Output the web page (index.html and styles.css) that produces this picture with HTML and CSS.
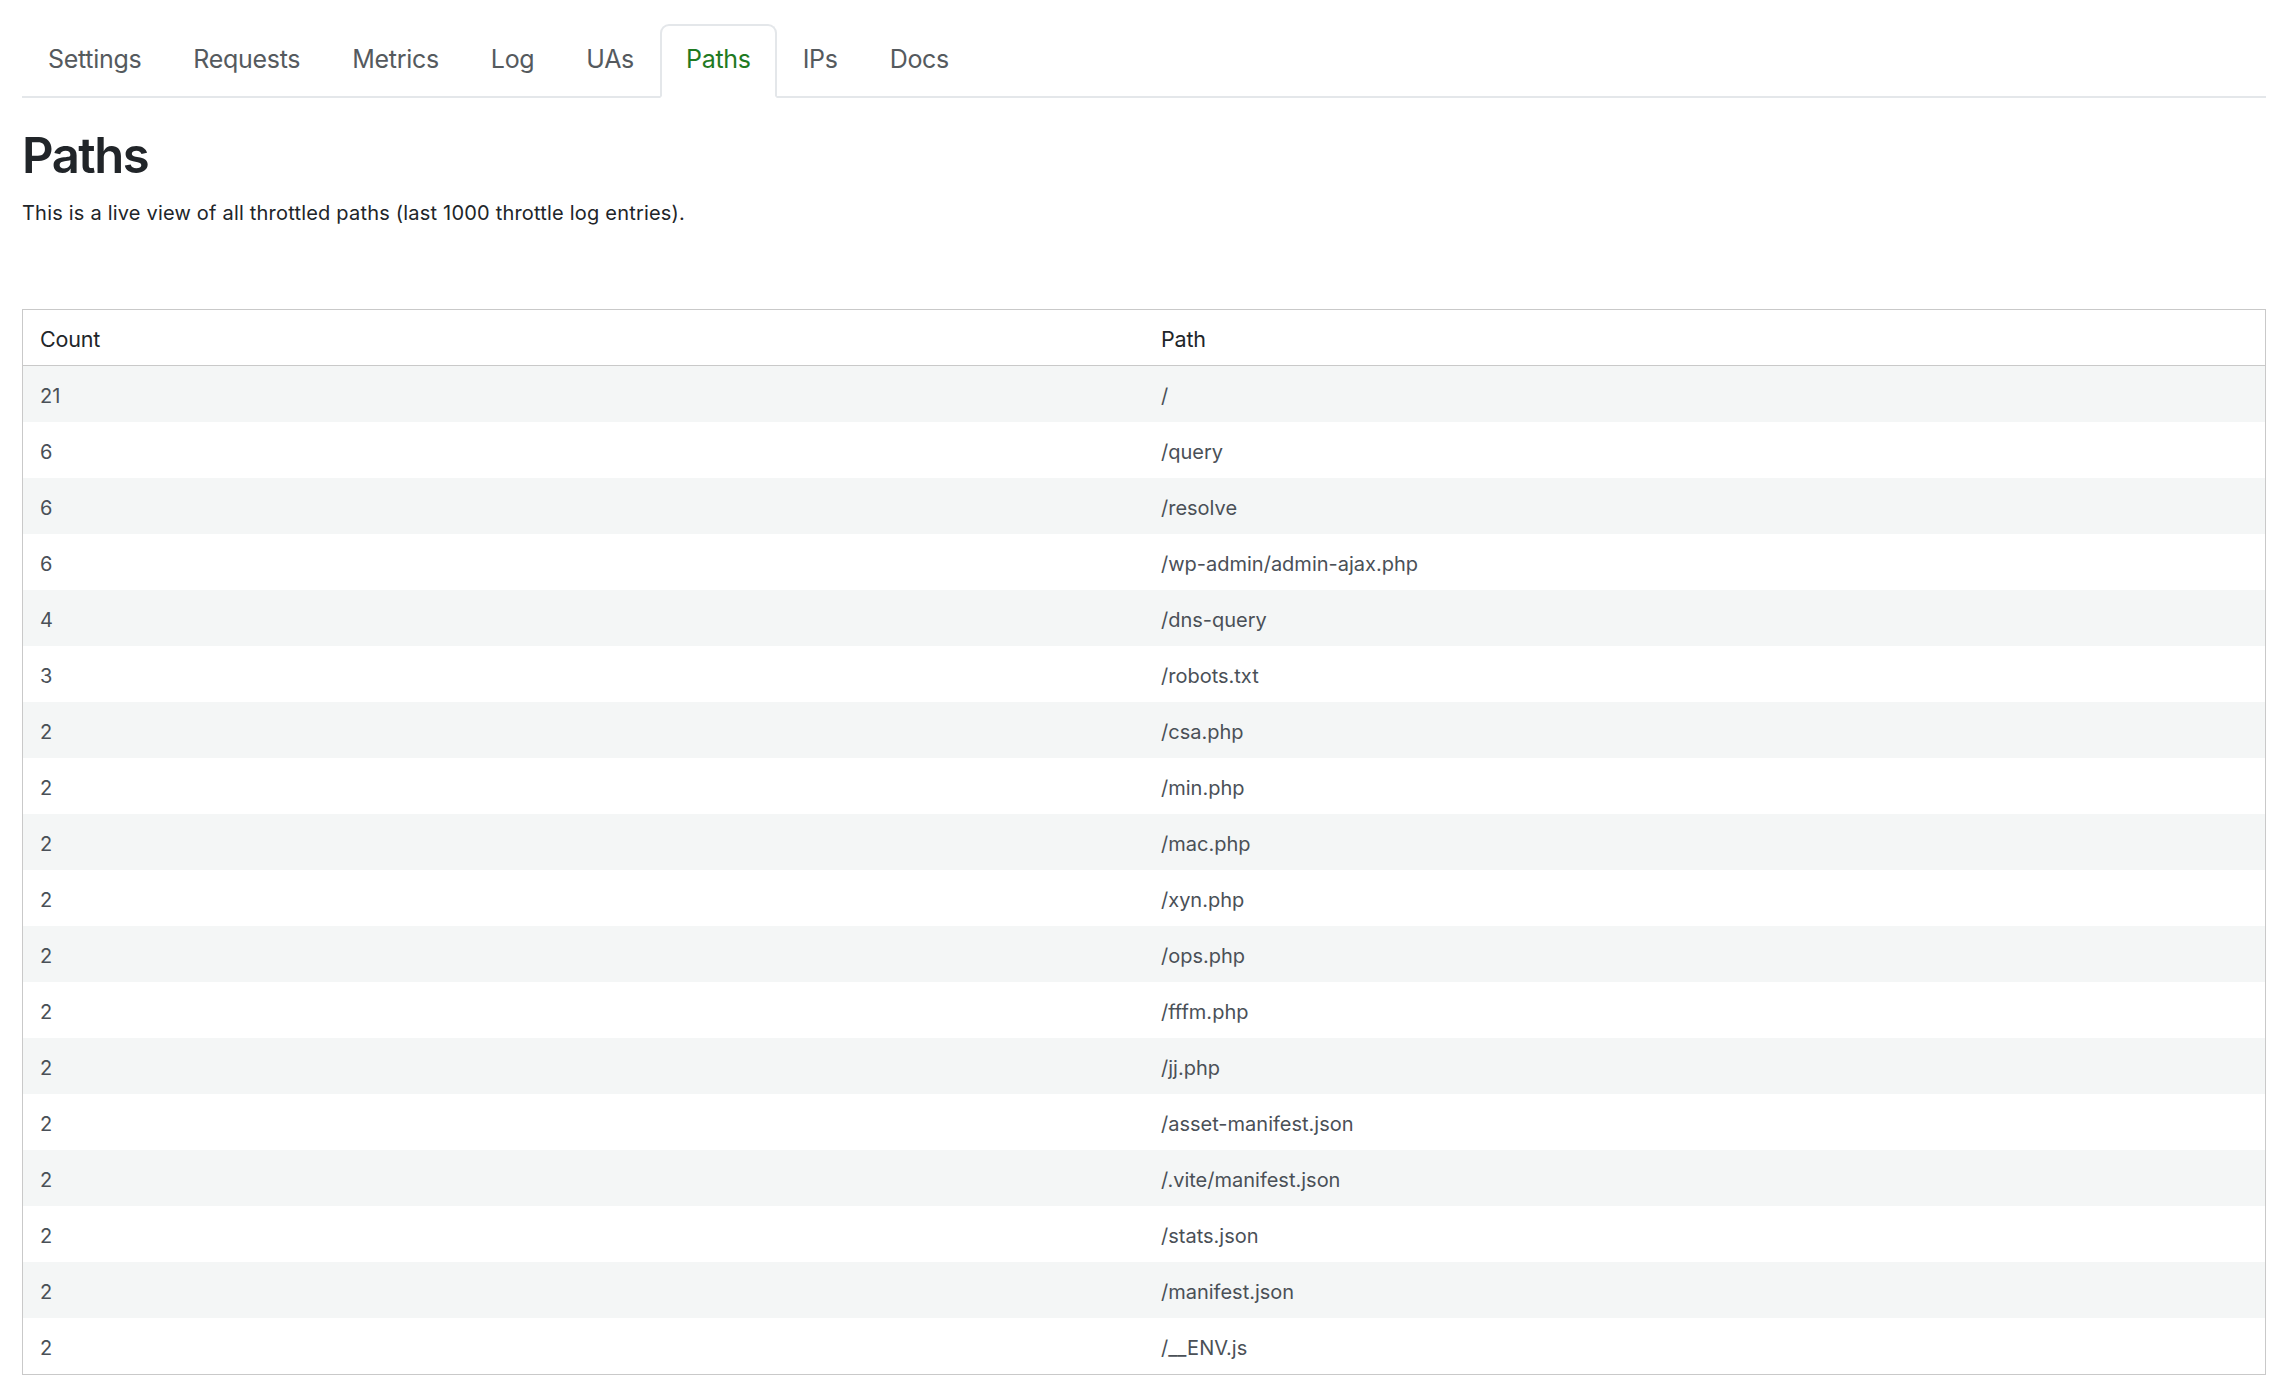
FILE: index.html
```html
<!DOCTYPE html>
<html lang="en">
<head>
<meta charset="utf-8">
<title>Paths</title>
<link rel="stylesheet" href="styles.css">
</head>
<body>
<div class="page">
  <nav class="tabs">
    <a class="tab" href="#">Settings</a>
    <a class="tab" href="#">Requests</a>
    <a class="tab" href="#">Metrics</a>
    <a class="tab" href="#">Log</a>
    <a class="tab" href="#">UAs</a>
    <a class="tab active" href="#">Paths</a>
    <a class="tab" href="#">IPs</a>
    <a class="tab" href="#">Docs</a>
  </nav>
  <h1 class="title">Paths</h1>
  <p class="lead">This is a live view of all throttled paths (last 1000 throttle log entries).</p>
  <table class="grid">
    <thead>
      <tr><th>Count</th><th>Path</th></tr>
    </thead>
    <tbody>
      <tr><td>21</td><td>/</td></tr>
      <tr><td>6</td><td>/query</td></tr>
      <tr><td>6</td><td>/resolve</td></tr>
      <tr><td>6</td><td>/wp-admin/admin-ajax.php</td></tr>
      <tr><td>4</td><td>/dns-query</td></tr>
      <tr><td>3</td><td>/robots.txt</td></tr>
      <tr><td>2</td><td>/csa.php</td></tr>
      <tr><td>2</td><td>/min.php</td></tr>
      <tr><td>2</td><td>/mac.php</td></tr>
      <tr><td>2</td><td>/xyn.php</td></tr>
      <tr><td>2</td><td>/ops.php</td></tr>
      <tr><td>2</td><td>/fffm.php</td></tr>
      <tr><td>2</td><td>/jj.php</td></tr>
      <tr><td>2</td><td>/asset-manifest.json</td></tr>
      <tr><td>2</td><td>/.vite/manifest.json</td></tr>
      <tr><td>2</td><td>/stats.json</td></tr>
      <tr><td>2</td><td>/manifest.json</td></tr>
      <tr><td>2</td><td>/__ENV.js</td></tr>
    </tbody>
  </table>
</div>
</body>
</html>
```

FILE: styles.css
```css
* { box-sizing: border-box; }

html, body {
  margin: 0;
  padding: 0;
  background: #ffffff;
}

body {
  font-family: Inter, "Liberation Sans", Arial, sans-serif;
  color: #212529;
}

.page {
  padding: 24px 12px 0 22px;
}

.tabs {
  display: flex;
  border-bottom: 2px solid #e4e7ea;
}

.tab {
  display: block;
  padding: 14px 24px 19px;
  font-size: 25px;
  line-height: 39px;
  letter-spacing: -0.3px;
  color: #555a5e;
  text-decoration: none;
  border: 2px solid transparent;
  border-bottom: none;
  border-radius: 9px 9px 0 0;
  margin-bottom: -2px;
}

.tab.active {
  color: #1f7a22;
  background: #ffffff;
  border-color: #e4e7ea;
  border-bottom: 2px solid #ffffff;
  padding-bottom: 17px;
}

.title {
  margin: 28px 0 0;
  font-size: 49px;
  line-height: 60px;
  font-weight: 600;
  letter-spacing: -1.5px;
  color: #212529;
}

.lead {
  margin: 12px 0 0;
  font-size: 20px;
  line-height: 30px;
  letter-spacing: 0.2px;
  color: #212529;
}

.grid {
  margin-top: 81px;
  width: 100%;
  table-layout: fixed;
  border-collapse: collapse;
  border: 1px solid #c9c9c9;
}

.grid th {
  text-align: left;
  font-weight: 400;
  font-size: 21.5px;
  line-height: 33px;
  letter-spacing: -0.2px;
  padding: 13px 17px 9px;
  color: #212529;
  border-bottom: 1px solid #c9c9c9;
}

.grid td {
  font-size: 20px;
  line-height: 30px;
  letter-spacing: 0;
  padding: 15px 17px 11px;
  color: #4a5057;
}

.grid tbody tr:nth-child(odd) td {
  background: #f4f6f6;
}
```
